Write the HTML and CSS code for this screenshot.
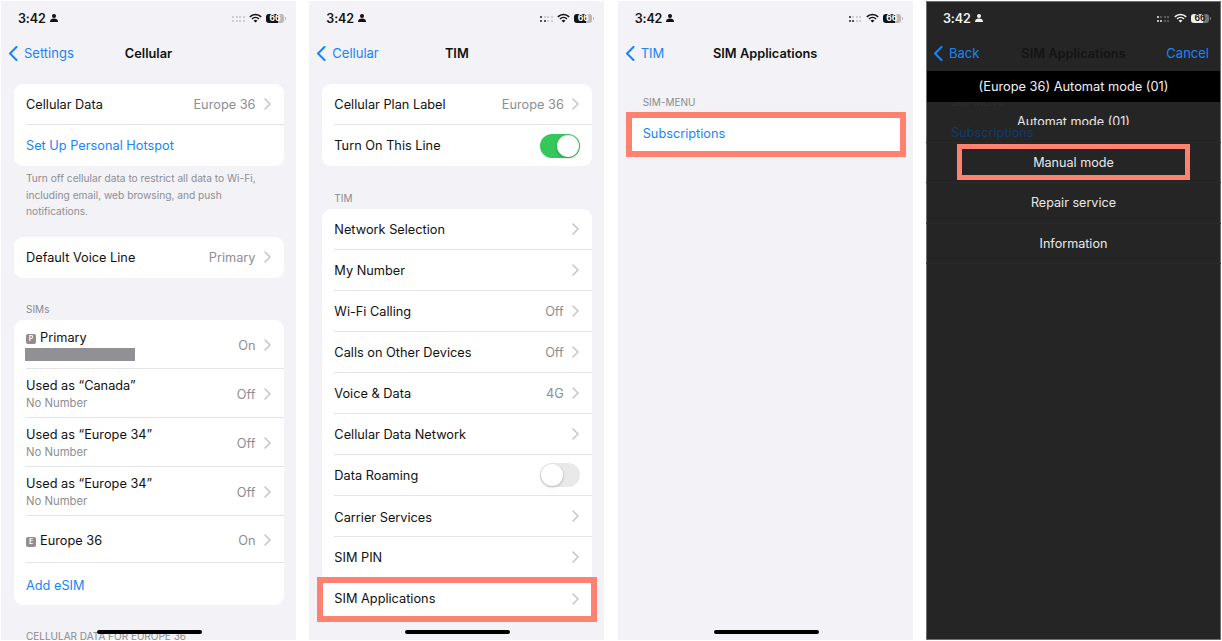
FILE: index.html
```html
<!DOCTYPE html>
<html lang="en">
<head>
    <meta charset="UTF-8">
    <meta name="viewport" content="width=device-width, initial-scale=1.0">
    <title>SIM Applications walkthrough</title>
    <link rel="stylesheet" href="styles.css">
</head>
<body>
    <svg class="icon-defs" xmlns="http://www.w3.org/2000/svg">
        <symbol id="chevron" viewBox="0 0 7 12"><path d="M1 1l5 5-5 5" fill="none" stroke="currentColor" stroke-width="1.5" stroke-linecap="round" stroke-linejoin="round"/></symbol>
        <symbol id="back" viewBox="0 0 10 15"><path d="M8.5 1L2 7.500l6.500 6.500" fill="none" stroke="currentColor" stroke-width="2.100" stroke-linecap="round" stroke-linejoin="round"/></symbol>
        <symbol id="person" viewBox="0 0 8 8"><circle cx="4" cy="2" r="2" fill="currentColor"/><path d="M0 8c0-2.400 1.600-3.400 4-3.400S8 5.600 8 8z" fill="currentColor"/></symbol>
        <symbol id="wifi" viewBox="0 0 16 12"><path d="M1 4.600a10 10 0 0 1 14 0M3.700 7.200a6.200 6.200 0 0 1 8.600 0" fill="none" stroke="currentColor" stroke-width="1.900"/><path d="M8 11.600L5.700 9.300a3.300 3.300 0 0 1 4.600 0z" fill="currentColor"/></symbol>
    </svg>

    <main class="shots">
        <!-- step 1 -->
        <section class="phone">
            <div class="status">
                <span class="time">3:42</span>
                <svg class="person"><use href="#person"/></svg>
                <span class="signal">
                    <i></i><i></i><i></i><i></i><i></i><i></i><i></i><i></i>
                </span>
                <svg class="wifi"><use href="#wifi"/></svg>
                <span class="battery">66</span>
            </div>
            <div class="nav">
                <a class="nav-back"><svg class="back"><use href="#back"/></svg>Settings</a>
                <h2 class="nav-title">Cellular</h2>
            </div>
            <div class="content">
                <div class="card">
                    <div class="row"><span class="row-label">Cellular Data</span><span class="value">Europe 36</span><svg class="chevron"><use href="#chevron"/></svg></div>
                    <div class="row row-end"><span class="row-label link">Set Up Personal Hotspot</span></div>
                </div>
                <p class="note">Turn off cellular data to restrict all data to Wi-Fi, including email, web browsing, and push notifications.</p>
                <div class="card card-voice">
                    <div class="row row-end"><span class="row-label">Default Voice Line</span><span class="value">Primary</span><svg class="chevron"><use href="#chevron"/></svg></div>
                </div>
                <h3 class="section">SIMs</h3>
                <div class="card">
                    <div class="row row-sim">
                        <div class="row-text">
                            <span class="row-label"><span class="badge">P</span>Primary</span>
                            <span class="redacted"></span>
                        </div>
                        <span class="value">On</span><svg class="chevron"><use href="#chevron"/></svg>
                    </div>
                    <div class="row row-sim">
                        <div class="row-text"><span class="row-label">Used as “Canada”</span><span class="sub">No Number</span></div>
                        <span class="value">Off</span><svg class="chevron"><use href="#chevron"/></svg>
                    </div>
                    <div class="row row-sim">
                        <div class="row-text"><span class="row-label">Used as “Europe 34”</span><span class="sub">No Number</span></div>
                        <span class="value">Off</span><svg class="chevron"><use href="#chevron"/></svg>
                    </div>
                    <div class="row row-sim">
                        <div class="row-text"><span class="row-label">Used as “Europe 34”</span><span class="sub">No Number</span></div>
                        <span class="value">Off</span><svg class="chevron"><use href="#chevron"/></svg>
                    </div>
                    <div class="row row-esim"><span class="row-label"><span class="badge">E</span>Europe 36</span><span class="value">On</span><svg class="chevron"><use href="#chevron"/></svg></div>
                    <div class="row row-end row-add"><span class="row-label link">Add eSIM</span></div>
                </div>
                <h3 class="section">CELLULAR DATA FOR EUROPE 36</h3>
            </div>
            <div class="home-bar"></div>
        </section>

        <!-- step 2 -->
        <section class="phone">
            <div class="status">
                <span class="time">3:42</span>
                <svg class="person"><use href="#person"/></svg>
                <span class="signal signal-two">
                    <i></i><i></i><i></i><i></i><i></i><i></i><i></i><i></i>
                </span>
                <svg class="wifi"><use href="#wifi"/></svg>
                <span class="battery">66</span>
            </div>
            <div class="nav">
                <a class="nav-back"><svg class="back"><use href="#back"/></svg>Cellular</a>
                <h2 class="nav-title">TIM</h2>
            </div>
            <div class="content">
                <div class="card">
                    <div class="row"><span class="row-label">Cellular Plan Label</span><span class="value">Europe 36</span><svg class="chevron"><use href="#chevron"/></svg></div>
                    <div class="row row-end"><span class="row-label">Turn On This Line</span><span class="toggle toggle-on"></span></div>
                </div>
                <h3 class="section section-tim">TIM</h3>
                <div class="card">
                    <div class="row"><span class="row-label">Network Selection</span><svg class="chevron"><use href="#chevron"/></svg></div>
                    <div class="row"><span class="row-label">My Number</span><svg class="chevron"><use href="#chevron"/></svg></div>
                    <div class="row"><span class="row-label">Wi-Fi Calling</span><span class="value">Off</span><svg class="chevron"><use href="#chevron"/></svg></div>
                    <div class="row"><span class="row-label">Calls on Other Devices</span><span class="value">Off</span><svg class="chevron"><use href="#chevron"/></svg></div>
                    <div class="row"><span class="row-label">Voice &amp; Data</span><span class="value">4G</span><svg class="chevron"><use href="#chevron"/></svg></div>
                    <div class="row"><span class="row-label">Cellular Data Network</span><svg class="chevron"><use href="#chevron"/></svg></div>
                    <div class="row"><span class="row-label">Data Roaming</span><span class="toggle"></span></div>
                    <div class="row"><span class="row-label row-label-cut">Carrier Services</span><svg class="chevron"><use href="#chevron"/></svg></div>
                    <div class="row"><span class="row-label">SIM PIN</span><svg class="chevron"><use href="#chevron"/></svg></div>
                    <div class="row row-end"><span class="row-label">SIM Applications</span><svg class="chevron"><use href="#chevron"/></svg></div>
                </div>
            </div>
            <div class="highlight highlight-apps"></div>
            <div class="home-bar"></div>
        </section>

        <!-- step 3 -->
        <section class="phone">
            <div class="status">
                <span class="time">3:42</span>
                <svg class="person"><use href="#person"/></svg>
                <span class="signal signal-two">
                    <i></i><i></i><i></i><i></i><i></i><i></i><i></i><i></i>
                </span>
                <svg class="wifi"><use href="#wifi"/></svg>
                <span class="battery">66</span>
            </div>
            <div class="nav">
                <a class="nav-back"><svg class="back"><use href="#back"/></svg>TIM</a>
                <h2 class="nav-title">SIM Applications</h2>
            </div>
            <div class="content">
                <h3 class="section section-first">SIM-MENU</h3>
                <div class="card">
                    <div class="row row-end"><span class="row-label link">Subscriptions</span></div>
                </div>
            </div>
            <div class="highlight highlight-subs"></div>
            <div class="home-bar"></div>
        </section>

        <!-- step 4 -->
        <section class="phone phone-dark">
            <div class="status">
                <span class="time">3:42</span>
                <svg class="person"><use href="#person"/></svg>
                <span class="signal signal-two">
                    <i></i><i></i><i></i><i></i><i></i><i></i><i></i><i></i>
                </span>
                <svg class="wifi"><use href="#wifi"/></svg>
                <span class="battery">66</span>
            </div>
            <div class="nav">
                <a class="nav-back"><svg class="back"><use href="#back"/></svg>Back</a>
                <h2 class="nav-title">SIM Applications</h2>
                <a class="nav-cancel">Cancel</a>
            </div>
            <div class="menu-title">(Europe 36) Automat mode (01)</div>
            <div class="sheet">
                <div class="ghost">
                    <span class="ghost-label">SIM-MENU</span>
                    <span class="ghost-link">Subscriptions</span>
                </div>
                <ul class="menu">
                    <li class="menu-cut"><span>Automat mode (01)</span></li>
                    <li>Manual mode</li>
                    <li>Repair service</li>
                    <li>Information</li>
                </ul>
            </div>
            <div class="highlight highlight-manual"></div>
        </section>
    </main>
</body>
</html>
```

FILE: styles.css
```css
:root {
    --blue: #1a84f5;
    --grey-text: #8e8e93;
    --page-bg: #f2f2f7;
    --divider: #e4e4e7;
    --coral: #ff8170;
}
* {
    box-sizing: border-box;
}
body {
    margin: 0;
    background-color: #fff;
    color: #111;
    font-family: 'Inter', 'Liberation Sans', sans-serif;
    overflow: hidden;
}
.icon-defs {
    display: none;
}
.shots {
    width: 1222px;
    height: 641px;
    padding: 1px;
    display: flex;
    justify-content: space-between;
}
.phone {
    position: relative;
    width: 295px;
    height: 639px;
    background-color: var(--page-bg);
    overflow: hidden;
}

/* status bar */
.status {
    height: 34px;
    padding: 0 11px 0 17px;
    display: flex;
    align-items: center;
}
.time {
    font-size: 12.5px;
    font-weight: 600;
    letter-spacing: -0.1px;
}
.person {
    width: 8px;
    height: 8px;
    margin-left: 4px;
    margin-bottom: 1px;
}
.signal {
    margin-left: auto;
    width: 13px;
    display: grid;
    grid-template-columns: repeat(4, 2px);
    gap: 1.500px 1.500px;
    margin-top: 2px;
    color: #c2c2c6;
}
.signal i {
    width: 2px;
    height: 2px;
    border-radius: 50%;
    background-color: currentColor;
}
.signal-two i:nth-child(5),
.signal-two i:nth-child(6),
.signal-two i:nth-child(1) {
    background-color: #222;
}
.wifi {
    width: 13px;
    height: 10px;
    margin-left: 4px;
}
.battery {
    position: relative;
    width: 18px;
    height: 9px;
    margin-left: 4px;
    margin-right: 1px;
    border-radius: 3px;
    background: linear-gradient(to right, #111 66%, #b9b9bc 66%);
    color: #fff;
    font-size: 8.500px;
    font-weight: 700;
    line-height: 9px;
    text-align: center;
}
.battery::after {
    content: '';
    position: absolute;
    right: -2px;
    top: 3px;
    width: 1px;
    height: 3px;
    background-color: #b9b9bc;
}

/* nav */
.nav {
    position: relative;
    height: 36px;
    display: flex;
    align-items: center;
    justify-content: space-between;
    padding: 0 12px 0 7px;
    font-size: 13px;
}
.nav-back {
    display: flex;
    align-items: center;
    gap: 6px;
    color: var(--blue);
}
.back {
    width: 10px;
    height: 15px;
}
.nav-title {
    position: absolute;
    left: 0;
    right: 0;
    margin: 0;
    text-align: center;
    font-size: 12.800px;
    font-weight: 600;
}
.nav-cancel {
    position: relative;
    color: var(--blue);
}

/* settings lists */
.content {
    padding: 13px 12px 0 13px;
}
.card {
    background-color: #fff;
    border-radius: 9px;
    overflow: hidden;
}
.card-voice {
    margin-top: 17px;
}
.row {
    height: 41px;
    margin-left: 12px;
    padding-right: 13.500px;
    display: flex;
    align-items: center;
    border-bottom: 1px solid var(--divider);
    font-size: 12.750px;
}
.row-end {
    border-bottom: none;
}
.row-sim {
    height: 49px;
    padding-top: 3px;
}
.row-esim {
    height: 47px;
    padding-top: 3px;
}
.row-add {
    height: 42px;
    padding-top: 3px;
}
.row-label {
    margin-right: auto;
}
.row-label-cut {
    height: 13px;
    margin-top: 1px;
    overflow: hidden;
    line-height: 15px;
}
.row-text {
    margin-right: auto;
    display: flex;
    flex-direction: column;
}
.link {
    color: var(--blue);
}
.value {
    color: var(--grey-text);
}
.chevron {
    width: 7px;
    height: 12px;
    margin-left: 8px;
    color: #c5c5c8;
}
.sub {
    margin-top: 3px;
    color: var(--grey-text);
    font-size: 11.300px;
}
.badge {
    display: inline-block;
    width: 10px;
    height: 10px;
    margin-right: 4px;
    border-radius: 2px;
    background-color: #8e8e93;
    color: #fff;
    font-size: 7px;
    font-weight: 600;
    line-height: 10px;
    text-align: center;
    vertical-align: 1px;
}
.redacted {
    width: 110px;
    height: 13px;
    margin-top: 3px;
    margin-left: -1px;
    background-color: #919195;
}
.note {
    margin: 4px 0 0;
    padding: 0 12px;
    color: var(--grey-text);
    font-size: 10.200px;
    line-height: 16.500px;
}
.section {
    margin: 24px 0 3px;
    padding-left: 12px;
    height: 15px;
    color: #8a8a8e;
    font-size: 10px;
    font-weight: 400;
    line-height: 15px;
    white-space: nowrap;
}
.section-tim {
    margin-bottom: 4px;
    padding-top: 1px;
}
.section-first {
    margin-top: 10px;
    margin-bottom: 4px;
    padding-top: 1px;
}
.toggle {
    position: relative;
    width: 40px;
    height: 24px;
    margin-right: -1px;
    border-radius: 12px;
    background-color: #e9e9ea;
}
.toggle::after {
    content: '';
    position: absolute;
    left: 1px;
    top: 1px;
    width: 22px;
    height: 22px;
    border-radius: 50%;
    background-color: #fff;
    box-shadow: 0 1px 3px rgba(0, 0, 0, 0.25);
}
.toggle-on {
    background-color: #34c759;
}
.toggle-on::after {
    left: 17px;
}
.home-bar {
    position: absolute;
    left: 96px;
    bottom: 6px;
    width: 105px;
    height: 4px;
    border-radius: 2px;
    background-color: #000;
}

/* orange call-outs */
.highlight {
    position: absolute;
    border: 6px solid var(--coral);
}
.highlight-apps {
    left: 8px;
    top: 576px;
    width: 280px;
    height: 45px;
}
.highlight-subs {
    left: 8px;
    top: 111px;
    width: 280px;
    height: 45px;
}
.highlight-manual {
    left: 31px;
    top: 143px;
    width: 233px;
    height: 36px;
    border-width: 5px;
}

/* dark sim toolkit screen */
.phone-dark {
    background-color: #252525;
    color: #f2f2f2;
    box-shadow: inset 0 0 0 1px #6e6e6e;
}
.phone-dark .signal {
    color: #6c6c6c;
}
.phone-dark .signal-two i:nth-child(5),
.phone-dark .signal-two i:nth-child(6),
.phone-dark .signal-two i:nth-child(1) {
    background-color: #eee;
}
.phone-dark .battery {
    background: linear-gradient(to right, #f0f0f0 66%, #777 66%);
    color: #222;
}
.phone-dark .battery::after {
    background-color: #777;
}
.phone-dark .nav-title {
    color: #141414;
}
.menu-title {
    position: relative;
    z-index: 1;
    height: 31px;
    margin: 0 1px;
    background-color: #000;
    font-size: 12.800px;
    line-height: 31px;
    text-align: center;
}
.sheet {
    display: grid;
}
.ghost,
.menu {
    grid-area: 1 / 1;
}
.ghost {
    padding-left: 25px;
    display: flex;
    flex-direction: column;
    align-items: flex-start;
}
.ghost-label {
    height: 7px;
    color: #303030;
    font-size: 10px;
    line-height: 0;
}
.ghost-link {
    margin-top: 16px;
    color: #123a68;
    font-size: 12.750px;
}
.menu {
    list-style: none;
    margin: 0;
    padding: 0;
    font-size: 12.600px;
    text-align: center;
    color: #e9e9e9;
}
.menu li {
    height: 40.500px;
    line-height: 40px;
    border-bottom: 1px solid #2a2a2a;
}
.menu-cut {
    display: flex;
    justify-content: center;
    align-items: flex-start;
    padding-top: 12px;
}
.menu-cut span {
    height: 11px;
    overflow: hidden;
    line-height: 16px;
}
```
